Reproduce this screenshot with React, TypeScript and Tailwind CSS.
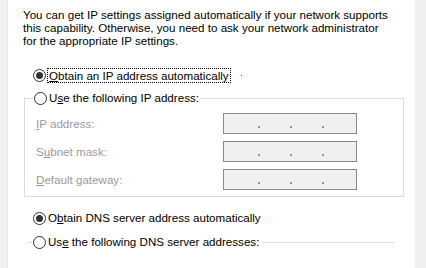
const font = { fontFamily: '"Liberation Sans", Arial, sans-serif' };

const Radio = ({ checked }: { checked?: boolean }) => (
    <span className="w-[13px] h-[13px] rounded-full border border-[#333333] bg-white flex items-center justify-center shrink-0">
        {checked && <span className="w-[7px] h-[7px] rounded-full bg-[#333333]" />}
    </span>
);

const IpBox = () => (
    <div className="w-[134px] h-[21px] border border-[#8a8a8a] bg-[#f0f0f0] flex items-end pb-[5px] pl-[34px] gap-[30px]">
        <span className="w-[2px] h-[2px] bg-[#8d97a3]" />
        <span className="w-[2px] h-[2px] bg-[#8d97a3]" />
        <span className="w-[2px] h-[2px] bg-[#8d97a3]" />
    </div>
);

const fields = [
    { pre: '', key: 'I', rest: 'P address:' },
    { pre: 'S', key: 'u', rest: 'bnet mask:' },
    { pre: '', key: 'D', rest: 'efault gateway:' },
];

export default function App() {
    return (
        <div className="w-[426px] h-[268px] bg-[#f0f0f0] flex text-[11.6px] text-black overflow-hidden" style={font}>
            <div className="w-[8px] border-r border-[#e6e6e6]" />
            <div className="w-[407px] bg-white flex flex-col">
                <p className="ml-[15px] mt-[8px] leading-[13px]">
                    You can get IP settings assigned automatically if your network supports<br />
                    this capability. Otherwise, you need to ask your network administrator<br />
                    for the appropriate IP settings.
                </p>

                <div className="mt-[21px] ml-[25px] flex items-center gap-[2px] h-[14px]">
                    <Radio checked />
                    <span className="outline outline-1 outline-dotted outline-black px-[1px] leading-[13px]">
                        <u>O</u>btain an IP address automatically
                    </span>
                    <span className="ml-[9px] w-px h-px bg-[#e04040]" />
                </div>

                <fieldset className="ml-[16px] mt-[8px] w-[380px] border border-[#dcdcdc] pl-[11px] pr-[12px] pb-[6px]">
                    <legend className="ml-[-3px] px-[1px] flex items-center gap-[2px] h-[16px]">
                        <Radio />
                        <span>U<u>s</u>e the following IP address:</span>
                    </legend>
                    <div className="flex flex-col gap-[7px] mt-[7px]">
                        {fields.map((f) => (
                            <div key={f.rest} className="flex items-center">
                                <span className="w-[187px] text-[#9a9a9a]">
                                    {f.pre}<u>{f.key}</u>{f.rest}
                                </span>
                                <IpBox />
                            </div>
                        ))}
                    </div>
                </fieldset>

                <div className="mt-[14px] ml-[25px] flex items-center gap-[2px] h-[14px]">
                    <Radio checked />
                    <span>O<u>b</u>tain DNS server address automatically</span>
                </div>

                <div className="mt-[10px] ml-[20px] mr-[20px] flex items-center h-[14px]">
                    <span className="w-[4px] h-px bg-[#dcdcdc]" />
                    <span className="ml-[1px] flex items-center gap-[2px]">
                        <Radio />
                        <span>Us<u>e</u> the following DNS server addresses:</span>
                    </span>
                    <span className="ml-[3px] flex-1 h-px bg-[#dcdcdc]" />
                </div>
            </div>
            <div className="flex-1" />
        </div>
    );
}
